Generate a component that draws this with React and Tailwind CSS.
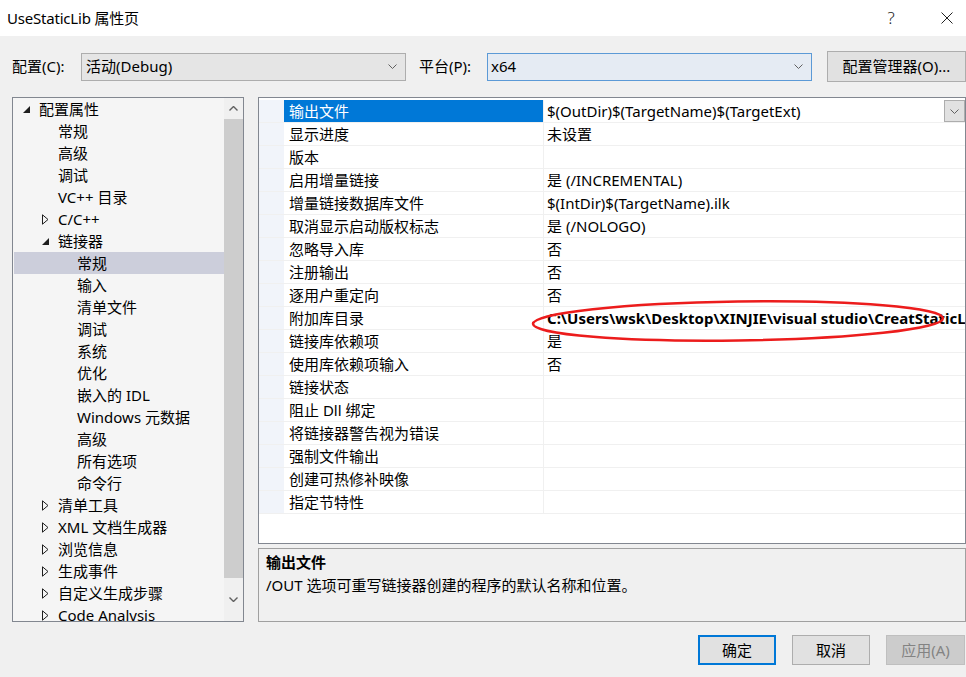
import React from 'react';

const FONT = { fontFamily: '"Noto Sans", "Noto Sans CJK SC", sans-serif' };

const tree = [
  { l: 0, t: '配置属性', e: 'open' },
  { l: 1, t: '常规' },
  { l: 1, t: '高级' },
  { l: 1, t: '调试' },
  { l: 1, t: 'VC++ 目录' },
  { l: 1, t: 'C/C++', e: 'closed' },
  { l: 1, t: '链接器', e: 'open' },
  { l: 2, t: '常规', sel: true },
  { l: 2, t: '输入' },
  { l: 2, t: '清单文件' },
  { l: 2, t: '调试' },
  { l: 2, t: '系统' },
  { l: 2, t: '优化' },
  { l: 2, t: '嵌入的 IDL' },
  { l: 2, t: 'Windows 元数据' },
  { l: 2, t: '高级' },
  { l: 2, t: '所有选项' },
  { l: 2, t: '命令行' },
  { l: 1, t: '清单工具', e: 'closed' },
  { l: 1, t: 'XML 文档生成器', e: 'closed' },
  { l: 1, t: '浏览信息', e: 'closed' },
  { l: 1, t: '生成事件', e: 'closed' },
  { l: 1, t: '自定义生成步骤', e: 'closed' },
  { l: 1, t: 'Code Analysis', e: 'closed' },
];

const props = [
  ['输出文件', '$(OutDir)$(TargetName)$(TargetExt)'],
  ['显示进度', '未设置'],
  ['版本', ''],
  ['启用增量链接', '是 (/INCREMENTAL)'],
  ['增量链接数据库文件', '$(IntDir)$(TargetName).ilk'],
  ['取消显示启动版权标志', '是 (/NOLOGO)'],
  ['忽略导入库', '否'],
  ['注册输出', '否'],
  ['逐用户重定向', '否'],
  ['附加库目录', 'C:\\Users\\wsk\\Desktop\\XINJIE\\visual studio\\CreatStaticLib\\x64\\Debug'],
  ['链接库依赖项', '是'],
  ['使用库依赖项输入', '否'],
  ['链接状态', ''],
  ['阻止 Dll 绑定', ''],
  ['将链接器警告视为错误', ''],
  ['强制文件输出', ''],
  ['创建可热修补映像', ''],
  ['指定节特性', ''],
];

function Chevron({ color = '#606060' }) {
  return (
    <svg width="9" height="5" viewBox="0 0 9 5">
      <path d="M0.5 0.5 L4.5 4.5 L8.5 0.5" fill="none" stroke={color} strokeWidth="1" />
    </svg>
  );
}

function TreeIcon({ e }) {
  if (e === 'open')
    return (
      <svg width="7" height="7" viewBox="0 0 7 7">
        <polygon points="7,0 7,7 0,7" fill="#1e1e1e" />
      </svg>
    );
  if (e === 'closed')
    return (
      <svg width="7" height="11" viewBox="0 0 7 11">
        <polygon points="0.5,0.8 6,5.5 0.5,10.2" fill="none" stroke="#1e1e1e" strokeWidth="1" />
      </svg>
    );
  return null;
}

const padCls = ['pl-[9px]', 'pl-[28px]', 'pl-[47px]'];

export default function App() {
  return (
    <div className="relative w-[966px] h-[677px] overflow-hidden bg-[#f0f0f0] text-[15px] text-black" style={FONT}>
      {/* title bar */}
      <div className="h-[36px] bg-white flex items-center pl-[7px]">
        <span className="text-[15px] tracking-[-0.2px]">UseStaticLib 属性页</span>
        <div className="ml-auto flex items-center">
          <span className="w-[20px] text-center text-[17px] font-light text-[#222] mr-[40px]">?</span>
          <svg width="12" height="12" viewBox="0 0 12 12" className="mr-[13px]">
            <path d="M0.5 0.5 L11.5 11.5 M11.5 0.5 L0.5 11.5" stroke="#222" strokeWidth="1" />
          </svg>
        </div>
      </div>

      {/* config row */}
      <div className="flex items-center mt-[15px] pl-[12px] h-[31px]">
        <span className="w-[69px]">配置(C):</span>
        <div className="w-[325px] h-[28px] bg-[#e5e5e5] border border-[#adadad] flex items-center pl-[4px] pr-[8px]">
          <span>活动(Debug)</span>
          <span className="ml-auto flex"><Chevron /></span>
        </div>
        <span className="ml-[13px] w-[68px]">平台(P):</span>
        <div className="w-[325px] h-[28px] bg-[#e5ebf3] border border-[#5c9ad6] flex items-center pl-[3px] pr-[8px]">
          <span>x64</span>
          <span className="ml-auto flex"><Chevron /></span>
        </div>
        <div className="ml-[15px] w-[139px] h-[31px] bg-[#e1e1e1] border border-[#adadad] flex items-center justify-center">
          配置管理器(O)...
        </div>
      </div>

      {/* main */}
      <div className="flex mt-[15px] pl-[12px]">
        {/* tree */}
        <div className="w-[232px] h-[525px] border border-[#828790] bg-[#f5f5f5] flex">
          <div className="flex-1 overflow-hidden pl-[1px]">
            {tree.map((n, i) => (
              <div
                key={i}
                className={`h-[22px] flex items-center ${padCls[n.l]} ${n.sel ? 'bg-[#cccedb]' : ''}`}
              >
                <span className="w-[16px] flex items-center">
                  <TreeIcon e={n.e} />
                </span>
                <span className="whitespace-nowrap">{n.t}</span>
              </div>
            ))}
          </div>
          <div className="w-[19px] bg-[#f0f0f0] flex flex-col items-stretch">
            <div className="h-[21px] flex items-center justify-center">
              <svg width="9" height="5" viewBox="0 0 9 5">
                <path d="M0.5 4.5 L4.5 0.5 L8.5 4.5" fill="none" stroke="#606060" strokeWidth="1.4" />
              </svg>
            </div>
            <div className="h-[459px] bg-[#cdcdcd]" />
            <div className="flex-1 flex items-center justify-center">
              <svg width="9" height="5" viewBox="0 0 9 5">
                <path d="M0.5 0.5 L4.5 4.5 L8.5 0.5" fill="none" stroke="#606060" strokeWidth="1.4" />
              </svg>
            </div>
          </div>
        </div>

        {/* right */}
        <div className="ml-[14px] w-[708px] flex flex-col">
          <div className="h-[447px] border border-[#828790] bg-white pt-[2px] overflow-hidden">
            {props.map(([k, v], i) => {
              const sel = i === 0;
              const bold = k === '附加库目录';
              return (
                <div key={i} className="h-[23px] flex border-b border-[#f0f0f0]">
                  <div className="w-[25px] bg-[#f1f4fa]" />
                  <div
                    className={`w-[259px] pl-[5px] flex items-center whitespace-nowrap ${sel ? 'bg-[#0078d7] text-white' : ''}`}
                  >
                    {k}
                  </div>
                  <div className="flex-1 border-l border-[#f0f0f0] pl-[3px] flex items-center overflow-hidden relative">
                    <span className={`whitespace-nowrap ${bold ? 'font-bold' : ''}`}>{v}</span>
                    {sel && (
                      <div className="absolute right-0 top-0 w-[21px] h-[22px] bg-[#e1e1e1] border border-[#adadad] flex items-center justify-center">
                        <Chevron />
                      </div>
                    )}
                  </div>
                </div>
              );
            })}
          </div>
          <div className="mt-[4px] h-[74px] border border-[#a0a0a0] bg-[#f0f0f0] pl-[7px] pt-[2px]">
            <div className="font-bold h-[23px] flex items-center">输出文件</div>
            <div className="h-[23px] flex items-center">/OUT 选项可重写链接器创建的程序的默认名称和位置。</div>
          </div>
        </div>
      </div>

      {/* buttons */}
      <div className="flex justify-end mt-[13px] pr-[1px] gap-[16px]">
        <div className="w-[78px] h-[30px] border-2 border-[#0078d7] bg-[#e1e1e1] flex items-center justify-center">确定</div>
        <div className="w-[78px] h-[30px] border border-[#adadad] bg-[#e1e1e1] flex items-center justify-center">取消</div>
        <div className="w-[79px] h-[30px] border border-[#bfbfbf] bg-[#cccccc] text-[#838383] flex items-center justify-center">应用(A)</div>
      </div>

      {/* red annotation ellipse */}
      <svg className="absolute left-0 top-0 pointer-events-none" width="966" height="677">
        <ellipse cx="738" cy="321" rx="205" ry="19.5" fill="none" stroke="#ec1c1c" strokeWidth="2.5" transform="rotate(-0.8 738 321)" />
      </svg>
    </div>
  );
}
